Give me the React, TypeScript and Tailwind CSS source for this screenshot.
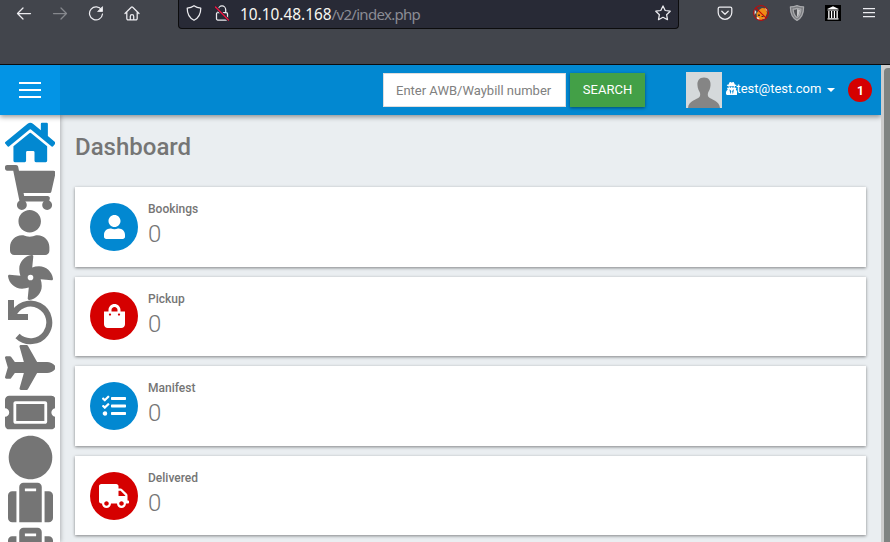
import type { ReactNode } from "react";
import type { IconType } from "react-icons";
import {
  FaCircle, FaFan, FaHome, FaPlane, FaShoppingBag, FaShoppingCart, FaSuitcase,
  FaTasks, FaTicketAlt, FaTruck, FaUser, FaUserSecret,
} from "react-icons/fa";

function UndoIcon({ className = "" }: { className?: string }) {
  return (
    <svg viewBox="0 0 45 45" className={className} fill="currentColor">
      <path d="M0 0h6v14h14v6H0z" />
      <path d="M4.800 16A18.800 18.800 0 1 1 9.500 36" fill="none" stroke="currentColor" strokeWidth="6" />
    </svg>
  );
}

const navIcons: { icon: IconType | typeof UndoIcon; size: string }[] = [
  { icon: FaHome, size: "h-[45px] w-[50.6px] text-[#0288d1]" },
  { icon: FaShoppingCart, size: "h-[45px] w-[50.6px]" },
  { icon: FaUser, size: "h-[45px] w-[39.4px]" },
  { icon: FaFan, size: "h-[45px] w-[45px]" },
  { icon: UndoIcon, size: "h-[45px] w-[45px]" },
  { icon: FaPlane, size: "h-[45px] w-[50.6px]" },
  { icon: FaTicketAlt, size: "h-[45px] w-[50.6px]" },
  { icon: FaCircle, size: "h-[45px] w-[45px]" },
  { icon: FaSuitcase, size: "h-[45px] w-[45px]" },
  { icon: FaSuitcase, size: "h-[45px] w-[45px]" },
];

const stats: { label: string; value: number; icon: IconType; size: string; color: string }[] = [
  { label: "Bookings", value: 0, icon: FaUser, size: "h-6 w-[21px]", color: "bg-[#0288d1]" },
  { label: "Pickup", value: 0, icon: FaShoppingBag, size: "h-6 w-[21px]", color: "bg-[#d50000]" },
  { label: "Manifest", value: 0, icon: FaTasks, size: "h-6 w-6", color: "bg-[#0288d1]" },
  { label: "Delivered", value: 0, icon: FaTruck, size: "h-6 w-[30px]", color: "bg-[#d50000]" },
];

function Glyph({ children, className = "" }: { children: ReactNode; className?: string }) {
  return (
    <svg
      viewBox="0 0 16 16"
      className={`h-4 w-4 shrink-0 fill-none stroke-[#ececf0] ${className}`}
      strokeWidth="1.25"
      strokeLinecap="round"
      strokeLinejoin="round"
    >
      {children}
    </svg>
  );
}

function BrowserBar() {
  return (
    <div className="flex h-[65px] items-start border-b border-[#0c0c0d] bg-[#42454c]">
      <div className="flex w-[178px] gap-5 pt-[5px] pl-4">
        <Glyph><path d="M14.5 8.5H1.5M7 3 1.5 8.5 7 14" /></Glyph>
        <Glyph className="opacity-40"><path d="M1.5 8.5h13M9 3l5.500 5.500L9 14" /></Glyph>
        <Glyph>
          <path d="M13.600 5A6.500 6.500 0 1 0 14.500 9" />
          <path d="M14.500 2v4.500H10z" fill="#f5f5f8" strokeWidth=".8" />
        </Glyph>
        <Glyph>
          <path d="M1 8.500 7.300 2.200a1 1 0 0 1 1.400 0L15 8.500M2.800 7v6.500a1.400 1.400 0 0 0 1.400 1.400h7.600a1.400 1.400 0 0 0 1.400-1.400V7M6.300 14.800v-3.600a1.700 1.700 0 0 1 3.400 0v3.600" />
        </Glyph>
      </div>
      <div className="flex h-[29px] w-[501px] items-start rounded-b-[4px] border border-t-0 border-[#0c0c0d] bg-[#282a36] pt-[5px] pl-[7px]">
        <Glyph><path d="M8 .7C6 2.200 3.800 2.900 1.200 3.100c0 5.600 1.300 9.700 6.800 12.200 5.500-2.500 6.800-6.600 6.800-12.200C12.200 2.900 10 2.200 8 .7z" /></Glyph>
        <Glyph className="ml-3">
          <path d="M4.300 7V4.700a3.700 3.700 0 0 1 7.400 0V7M3.800 7.500h8.400a1.300 1.300 0 0 1 1.300 1.300v4.900a1.300 1.300 0 0 1-1.300 1.300H3.800a1.300 1.300 0 0 1-1.300-1.300V8.800a1.300 1.300 0 0 1 1.300-1.300z" />
          <path d="m1.500 2 13 13" stroke="#282a36" strokeWidth="3" />
          <path d="m1.500 2 13 13" stroke="#f5103f" strokeWidth="1.300" />
        </Glyph>
        <span className="ml-[10px] h-4 w-[410px] pt-px font-['Noto_Sans',sans-serif] text-[15.4px] leading-[17px] whitespace-nowrap text-[#8b8c94]">
          <span className="text-[#f8f8f2]">10.10.48.168</span>
          <span className="text-[15px] tracking-[-0.7px]">/v2/index.php</span>
        </span>
        <Glyph className="ml-[5px]"><path d="m8 .9 2.200 4.600 5 .700-3.600 3.500.9 5L8 12.300l-4.500 2.400.9-5L.8 6.200l5-.7z" /></Glyph>
      </div>
      <div className="flex gap-5 pt-[5px] pl-[38px]">
        <Glyph>
          <path d="M2.700 2h10.600a1.500 1.500 0 0 1 1.500 1.500v4a6.800 6.800 0 0 1-13.600 0v-4A1.500 1.500 0 0 1 2.700 2zM4.800 6.200 8 9.300l3.200-3.100" />
        </Glyph>
        <Glyph className="stroke-none!">
          <path d="M3.500 8.500 6 5l3-2 4 .500 1 4.500-2 5-4 2.300-4-2z" fill="#f08b16" />
          <path d="m1.500 4.500 2 2.500-2 3zM12 3l2 1.500.500 2.500zM3 13l2-1 2 2.500-2 .200zM10 14l2-1.500.5.500z" fill="#ece6e2" />
          <path d="M5 9.500h2V11H5zM8.500 11h2v1h-2z" fill="#4b2b22" />
          <circle cx="8" cy="8" r="7.400" stroke="#c90606" strokeWidth="1" />
          <path d="m2.800 2.800 10.400 10.400" stroke="#c90606" strokeWidth="1.200" />
        </Glyph>
        <Glyph className="stroke-[#a8a9ac]!">
          <path d="M8 .6c2.200 1 4.400 1.300 6.600 1.300 0 6-1.500 10.600-6.600 13.500C2.900 12.500 1.400 7.900 1.400 1.900 3.600 1.900 5.800 1.600 8 .6z" fill="#77797d" />
          <path d="M8 3.300c1.200.5 2.500.8 3.900.8-.2 3.800-1.200 6.600-3.900 8.700-2.700-2.100-3.700-4.900-3.900-8.700 1.400 0 2.700-.3 3.900-.8z" fill="#505257" />
          <path d="M8 4v7.800c2-1.700 2.800-4 3-6.900C9.800 4.800 8.900 4.500 8 4z" fill="#c4c5c7" stroke="none" />
        </Glyph>
        <Glyph className="bg-black stroke-none!">
          <path d="M8 1.200 13.800 4H2.200zM2.500 4.500h11v1h-11zM3.200 6h1.300v7H3.200zM6 6h1.200v7H6zM8.800 6H10v7H8.800zM11.500 6h1.300v7h-1.300zM2.500 13.300h11v1.200h-11z" fill="#fff" />
        </Glyph>
        <Glyph><path d="M2 3.500h12M2 7.500h12M2 11.500h12" strokeLinecap="butt" /></Glyph>
      </div>
    </div>
  );
}

function Header() {
  return (
    <header className="relative z-10 flex h-[50px] items-start bg-[#0288d1] shadow-[0_2px_5px_rgba(0,0,0,0.4)]">
      <button className="flex h-[50px] w-[60px] flex-col items-center justify-center gap-[5px] bg-[#0394e5]" aria-label="Menu">
        <span className="h-0.5 w-[22px] bg-white" />
        <span className="h-0.5 w-[22px] bg-white" />
        <span className="h-0.5 w-[22px] bg-white" />
      </button>
      <input
        className="mt-2 ml-[323px] h-[34px] w-[183px] border border-[#ddd] bg-white px-3 text-[13px] outline-none placeholder:text-[#808080]"
        placeholder="Enter AWB/Waybill number"
      />
      <button className="mt-2 ml-1 h-[34px] w-[75px] bg-[#43a047] text-[13px] text-white shadow-[0_1px_3px_rgba(0,0,0,0.45)]">
        SEARCH
      </button>
      <svg className="mt-[7px] ml-[41px] h-9 w-9 bg-[#d5d9db]" viewBox="0 0 36 36">
        <path d="M18 5.500c-4.800 0-7 3.400-6.500 8 .1 1.300.3 2 .5 2.800.7 2.500 1.600 3.600 2 4.600.4 1.600.2 3.100-.6 4.100C11 27.700 2.500 28.500 2 36h32c-.5-7.500-9-8.300-11.400-11-.8-1-1-2.500-.6-4.100.4-1 1.300-2.100 2-4.600.2-.8.4-1.500.5-2.800.5-4.600-1.700-8-6.500-8z" fill="#858585" />
      </svg>
      <div className="mt-[15px] ml-1 flex h-[18px] items-center text-[13px] text-white">
        <FaUserSecret className="mb-[2px] h-[13px] w-[11.4px]" />
        <span className="-ml-px">test@test.com</span>
        <span className="mt-[2px] ml-[6px] border-x-4 border-t-4 border-x-transparent border-t-white" />
      </div>
      <span className="mt-[13px] ml-[13px] flex h-6 w-6 items-center justify-center rounded-full bg-[#d50000] pt-[2px] text-[12px] font-bold text-white">
        1
      </span>
    </header>
  );
}

export default function App() {
  return (
    <div className="h-[542px] w-[890px] overflow-hidden font-['Roboto',sans-serif] text-[#757575]">
      <BrowserBar />
      <div className="flex h-[477px]">
        <div className="w-[881px] overflow-hidden bg-[#eaeef1]">
          <Header />
          <div className="flex">
            <nav className="h-[427px] w-[60px] shrink-0 overflow-hidden bg-white pt-[5px] shadow-[1px_0_4px_rgba(0,0,0,0.25)]">
              {navIcons.map(({ icon: Icon, size }, i) => (
                <div key={i} className="flex h-[45px] items-center justify-center">
                  <Icon className={`shrink-0 ${size}`} />
                </div>
              ))}
            </nav>
            <main className="flex-1 pt-4 pr-[15px] pl-[15px]">
              <h1 className="mb-[24px] text-[24px] leading-8 font-medium">Dashboard</h1>
              <div className="flex flex-col gap-[10px]">
                {stats.map(({ label, value, icon: Icon, size, color }) => (
                  <section key={label} className="flex h-[79.6px] bg-white pt-[15.8px] pl-[15px] shadow-[0_1px_3px_rgba(0,0,0,0.45)]">
                    <div className={`flex h-12 w-12 items-center justify-center rounded-full text-white ${color}`}>
                      <Icon className={size} />
                    </div>
                    <div className="ml-[10px]">
                      <div className="-mt-[1.8px] text-[12px] leading-4 font-medium">{label}</div>
                      <div className="mt-0.5 text-[24px] leading-[30px] font-light">{value}</div>
                    </div>
                  </section>
                ))}
              </div>
            </main>
          </div>
        </div>
        <div className="w-[9px] bg-[#ccc] pt-[3px] pl-[3px]">
          <div className="h-full w-[9px] rounded-t-[4px] bg-[#7f8381]" />
        </div>
      </div>
    </div>
  );
}
